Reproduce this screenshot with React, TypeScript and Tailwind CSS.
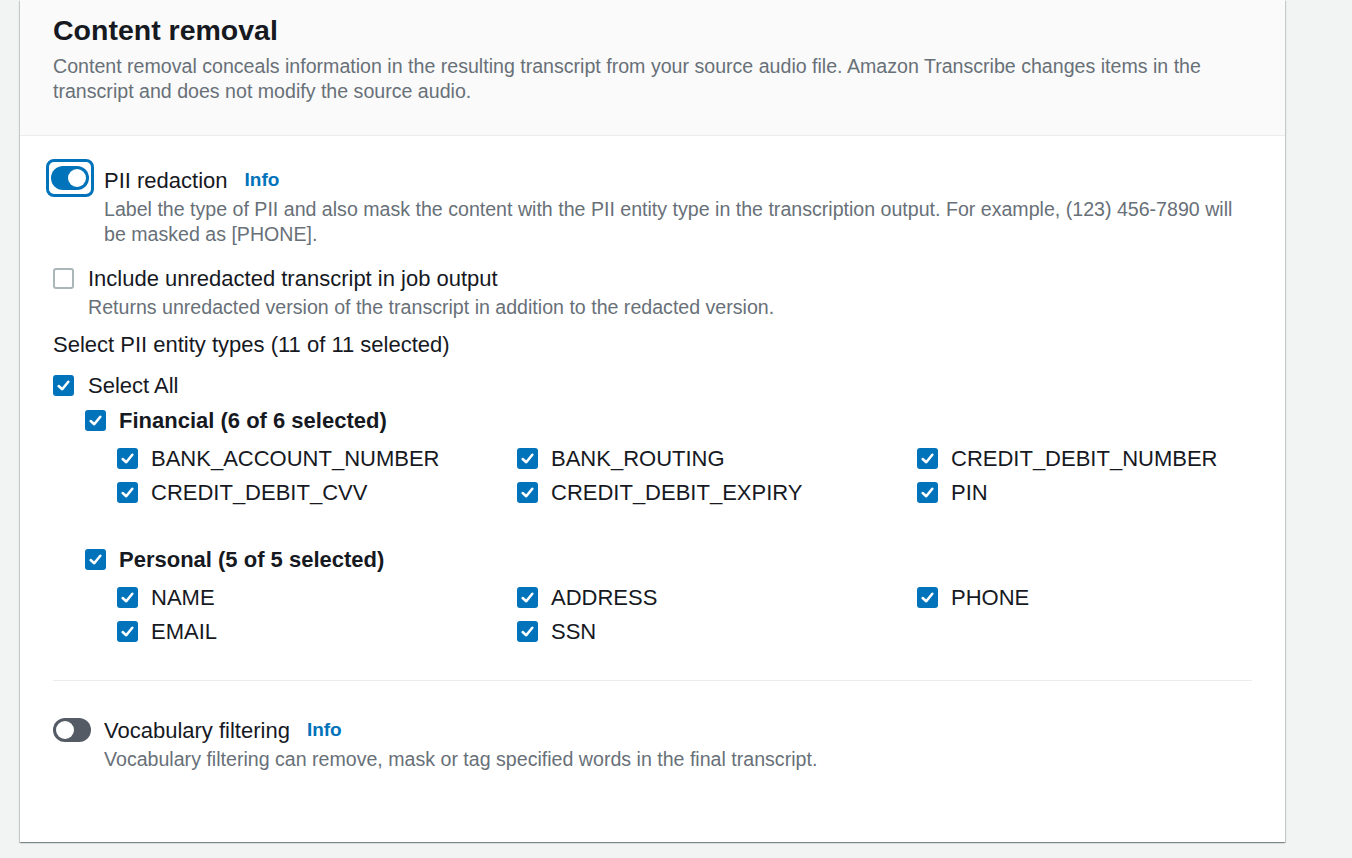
import React from 'react';

const font = { fontFamily: '"Liberation Sans", Arial, sans-serif' };

const Check = () => (
  <span className="flex h-[21px] w-[21px] shrink-0 items-center justify-center rounded-[3px] bg-[#0073bb]">
    <svg viewBox="0 0 14 14" className="h-[15px] w-[15px]" fill="none" stroke="#fff" strokeWidth="2.4" strokeLinecap="round" strokeLinejoin="round">
      <polyline points="2.5,7.5 5.8,10.5 11.5,3.5" />
    </svg>
  </span>
);

const EmptyBox = () => (
  <span className="h-[21px] w-[21px] shrink-0 rounded-[3px] border-2 border-[#aab7b8] bg-white" />
);

const Toggle = ({ on }: { on: boolean }) => (
  <span
    className={`flex h-[24px] w-[38px] shrink-0 items-center rounded-full px-[3px] ${
      on ? 'justify-end bg-[#0073bb]' : 'justify-start bg-[#545b64]'
    }`}
  >
    <span className="h-[18px] w-[18px] rounded-full bg-white" />
  </span>
);

const Info = () => <span className="ml-[17px] text-[19px] font-bold text-[#0073bb]">Info</span>;

const CheckRow = ({ label, bold }: { label: string; bold?: boolean }) => (
  <div className="flex h-[34px] items-center gap-[13px]">
    <Check />
    <span className={`text-[22px] text-[#16191f] ${bold ? 'font-bold' : ''}`}>{label}</span>
  </div>
);

const financial = [
  'BANK_ACCOUNT_NUMBER',
  'BANK_ROUTING',
  'CREDIT_DEBIT_NUMBER',
  'CREDIT_DEBIT_CVV',
  'CREDIT_DEBIT_EXPIRY',
  'PIN',
];

const personal = ['NAME', 'ADDRESS', 'PHONE', 'EMAIL', 'SSN'];

const EntityGrid = ({ items }: { items: string[] }) => (
  <div className="mt-[4px] grid grid-cols-[400px_400px_1fr] pl-[64px]">
    {items.map((item) => (
      <CheckRow key={item} label={item} />
    ))}
  </div>
);

export default function App() {
  return (
    <div className="h-[858px] w-full overflow-hidden bg-[#f2f3f3]" style={font}>
      <div className="ml-[20px] w-[1265px] bg-white shadow-[0_1px_1px_0_rgba(0,28,36,0.3),1px_1px_1px_0_rgba(0,28,36,0.15),-1px_1px_1px_0_rgba(0,28,36,0.15)]">
        {/* Header */}
        <div className="border-b border-[#eaeded] bg-[#fafafa] px-[33px] pt-[14px] pb-[31px]">
          <h2 className="text-[28.5px] leading-[32px] font-bold text-[#16191f]">Content removal</h2>
          <p className="mt-[8px] text-[19.6px] leading-[25px] text-[#687078]">
            Content removal conceals information in the resulting transcript from your source audio file. Amazon Transcribe changes items in the transcript and does not modify the source audio.
          </p>
        </div>

        {/* Body */}
        <div className="px-[33px] pt-[24px] pb-[70px]">
          {/* PII redaction */}
          <div className="flex items-start">
            <div className="-mt-[1px] -ml-[7px] flex h-[38px] w-[48px] shrink-0 items-center justify-center rounded-[8px] border-[3px] border-[#0073bb]">
              <Toggle on />
            </div>
            <div className="ml-[10px] pt-[3px]">
              <div className="flex h-[34px] items-center">
                <span className="text-[22px] text-[#16191f]">PII redaction</span>
                <Info />
              </div>
              <p className="text-[19.6px] leading-[25px] text-[#687078]">
                Label the type of PII and also mask the content with the PII entity type in the transcription output. For example, (123) 456-7890 will be masked as [PHONE].
              </p>
            </div>
          </div>

          {/* Unredacted */}
          <div className="mt-[14px] flex items-start gap-[14px]">
            <div className="flex h-[34px] items-center">
              <EmptyBox />
            </div>
            <div>
              <div className="flex h-[34px] items-center text-[22px] text-[#16191f]">Include unredacted transcript in job output</div>
              <p className="text-[19.6px] leading-[25px] text-[#687078]">
                Returns unredacted version of the transcript in addition to the redacted version.
              </p>
            </div>
          </div>

          <div className="mt-[7px] flex h-[34px] items-center text-[22px] text-[#16191f]">
            Select PII entity types (11 of 11 selected)
          </div>

          <div className="mt-[7px] flex h-[34px] items-center gap-[14px]">
            <Check />
            <span className="text-[22px] text-[#16191f]">Select All</span>
          </div>

          <div className="mt-[1px] pl-[32px]">
            <CheckRow label="Financial (6 of 6 selected)" bold />
          </div>
          <EntityGrid items={financial} />

          <div className="mt-[33px] pl-[32px]">
            <CheckRow label="Personal (5 of 5 selected)" bold />
          </div>
          <EntityGrid items={personal} />

          <div className="mt-[32px] border-t border-[#eaeded]" />

          {/* Vocabulary filtering */}
          <div className="mt-[32px] flex items-start gap-[13px]">
            <div className="flex h-[34px] items-center">
              <Toggle on={false} />
            </div>
            <div>
              <div className="flex h-[34px] items-center">
                <span className="text-[22px] text-[#16191f]">Vocabulary filtering</span>
                <Info />
              </div>
              <p className="text-[19.6px] leading-[25px] text-[#687078]">
                Vocabulary filtering can remove, mask or tag specified words in the final transcript.
              </p>
            </div>
          </div>
        </div>
      </div>
    </div>
  );
}
